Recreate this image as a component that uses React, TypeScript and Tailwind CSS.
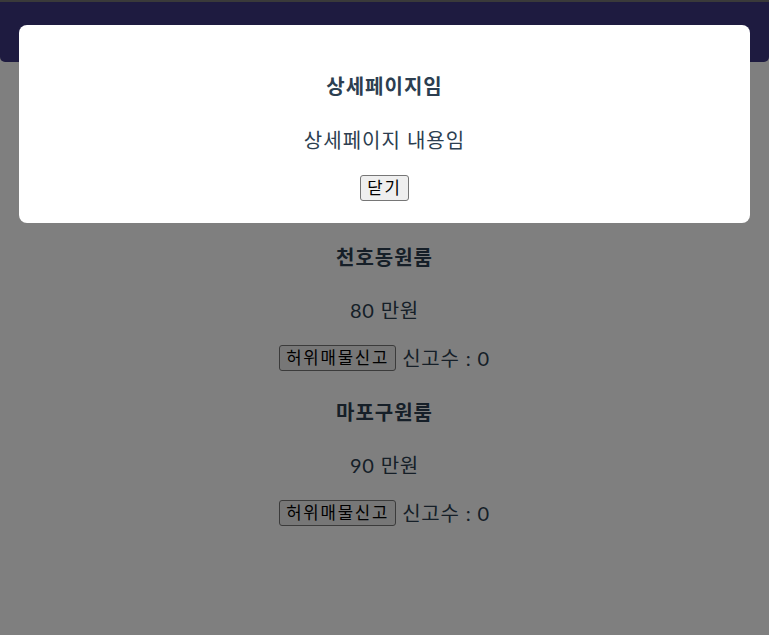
import React from 'react';

const rooms = [
  { name: '역삼동원룸', price: 60, reports: 0 },
  { name: '천호동원룸', price: 80, reports: 0 },
  { name: '마포구원룸', price: 90, reports: 0 },
];

const btn =
  'inline-flex items-center justify-center h-[26px] px-[6px] border border-[#767676] rounded-[3px] bg-[#efefef] text-black text-[16.7px] leading-none tracking-[1.8px]';

export default function App() {
  return (
    <div
      className="relative min-h-[635px] bg-white text-[#2c3e50] text-center"
      style={{ fontFamily: 'Lato, "Noto Sans CJK KR", sans-serif' }}
    >
      <div className="h-[2px] bg-[#747474]" />
      <nav className="h-[60px] bg-[#3c3680] rounded-b-[5px]" />

      <div className="pt-[26px]">
        {rooms.map((r) => (
          <div key={r.name} className="flex flex-col items-center mb-[27px]">
            <h4 className="text-[20px] font-bold leading-[28px] tracking-[1px]">{r.name}</h4>
            <p className="mt-[25px] text-[20px] leading-[28px] tracking-[0.8px]">{r.price} 만원</p>
            <div className="mt-[21px] h-[26px] flex items-center gap-[6px] text-[20px] leading-[26px] tracking-[0.8px]">
              <button className={btn}>허위매물신고</button>
              <span>신고수 : {r.reports}</span>
            </div>
          </div>
        ))}
      </div>

      {/* modal */}
      <div className="fixed inset-0 bg-black/50 pt-[25px] px-[19px]">
        <div className="bg-white rounded-[8px] h-[198px] pt-[47px] flex flex-col items-center text-[#2c3e50]">
          <h4 className="text-[20px] font-bold leading-[28px] tracking-[1px]">상세페이지임</h4>
          <p className="mt-[26px] text-[20px] leading-[28px] tracking-[1px]">상세페이지 내용임</p>
          <button className={`${btn} mt-[21px]`}>닫기</button>
        </div>
      </div>
    </div>
  );
}
